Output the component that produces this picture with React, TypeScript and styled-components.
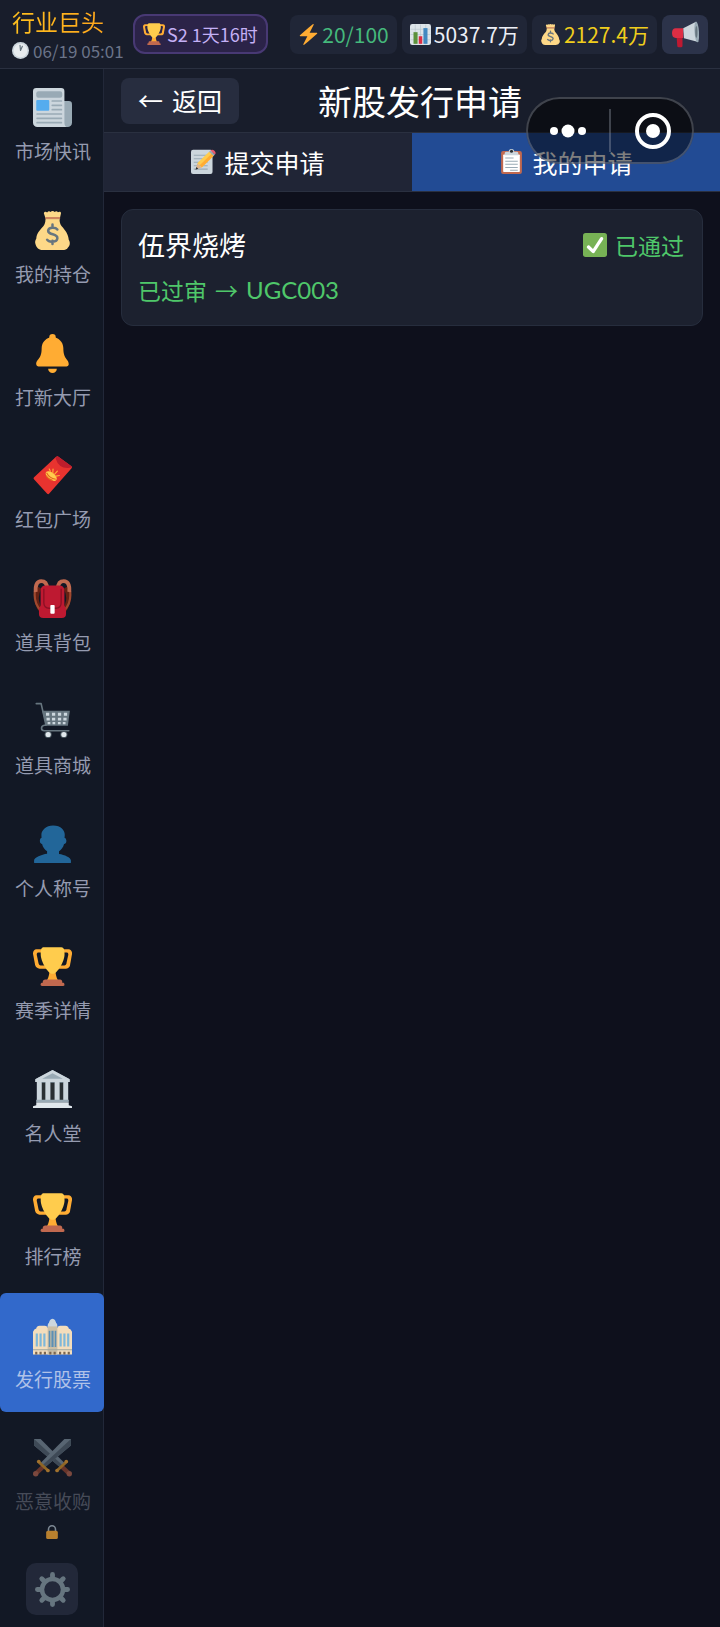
import React from "react";
import styled, { createGlobalStyle } from "styled-components";

const GlobalStyle = createGlobalStyle`
  * { box-sizing: border-box; }
  body {
    margin: 0;
    background: #0e101c;
    color: #fff;
    font-family: "Noto Sans CJK SC", sans-serif;
  }
  button { font: inherit; color: inherit; border: 0; margin: 0; }
  h1, h2, p, ul { margin: 0; padding: 0; font-weight: 400; }
  ul { list-style: none; }
`;

/* ---------- icons ---------- */

const Svg = styled.svg<{ $size: number }>`
  display: block;
  flex: none;
  width: ${(p) => p.$size}px;
  height: ${(p) => p.$size}px;
`;

const art: Record<string, React.ReactNode> = {
  trophy: (
    <>
      <path fill="#FFAC33" d="M5.123 5h6C12.227 5 13 4.896 13 6V4c0-1.104-.773-2-1.877-2h-8c-2 0-3.583 2.125-3 5 0 0 1.791 9.375 1.917 9.958C2.373 18.5 4.164 20 6.081 20h6.958c1.105 0-.039-1.896-.039-3v-2c0 1.104-.773 2-1.877 2h-4c-1.104 0-1.833-1.042-2-2S3.539 7.667 3.539 7.667C3.206 5.75 4.018 5 5.123 5zm25.812 0h-6C23.831 5 22 4.896 22 6V4c0-1.104 1.831-2 2.935-2h8c2 0 3.584 2.125 3 5 0 0-1.633 9.419-1.771 10-.354 1.5-2.042 3-4 3h-7.146C21.914 20 22 18.104 22 17v-2c0 1.104 1.831 2 2.935 2h4c1.104 0 1.834-1.042 2-2s1.584-7.333 1.584-7.333C32.851 5.75 32.04 5 30.935 5zM20.832 22c0-6.958-2.709 0-2.709 0s-3-6.958-3 0-3.291 10-3.291 10h12.292c-.001 0-3.292-3.042-3.292-10z" />
      <path fill="#FFCC4D" d="M29.123 6.577c0 6.775-6.77 18.192-11 18.192-4.231 0-11-11.417-11-18.192 0-5.195 1-6.319 3-6.319 1.374 0 6.025-.027 8-.027l7-.001c2.917-.001 4 .684 4 6.347z" />
      <path fill="#C1694F" d="M27 33c0 1.104.227 2-.877 2h-16C9.018 35 9 34.104 9 33v-1c0-1.104 1.164-2 2.206-2h13.917c1.042 0 1.877.896 1.877 2v1z" />
      <path fill="#C1694F" d="M29 34.625c0 .76.165 1.375-1.252 1.375H8.498C7.206 36 7 35.385 7 34.625v-.25C7 33.615 7.738 33 8.498 33h19.25c.759 0 1.252.615 1.252 1.375v.25z" />
    </>
  ),
  bell: (
    <g fill="#FFAC33">
      <path d="M28 13c0 11 5 10 5 15 0 0 0 2-2 2H5c-2 0-2-2-2-2 0-5 5-4 5-15C8 7.478 12.477 3 18 3s10 4.478 10 10z" />
      <circle cx="18" cy="3" r="3" />
      <path d="M18 36c2.209 0 4-1.791 4-4h-8c0 2.209 1.791 4 4 4z" />
    </g>
  ),
  person: (
    <path fill="#226699" d="M24 26.799v-2.566c2-1.348 4.08-3.779 4.703-6.896.186.103.206.17.413.17.991 0 1.709-1.287 1.709-2.873 0-1.562-.823-2.827-1.794-2.865.187-.674.293-1.577.293-2.735C29.324 5.168 26 .527 18.541.527c-6.629 0-10.777 4.641-10.777 8.507 0 1.123.069 2.043.188 2.755-.911.137-1.629 1.352-1.629 2.845 0 1.587.804 2.873 1.796 2.873.206 0 .025-.067.209-.17C8.952 20.453 11 22.885 13 24.232v2.414c-5 .645-12 3.437-12 6.23V34.5Q1 35 1.6 35h32.8q.6 0 .6-.5v-1.63c0-2.792-6-5.425-11-6.071z" />
  ),
  bolt: (
    <path fill="#FFAC33" d="M32.938 15.651C32.792 15.26 32.418 15 32 15H19.925L26.89 1.458c.219-.426.106-.947-.271-1.243C26.437.071 26.218 0 26 0c-.233 0-.466.082-.653.243L18 6.588 3.347 19.243c-.316.273-.43.714-.284 1.105S3.582 21 4 21h12.075L9.11 34.542c-.219.426-.106.947.271 1.243.182.144.401.215.619.215.233 0 .466-.082.653-.243L18 29.412l14.653-12.655c.317-.273.43-.714.285-1.106z" />
  ),
  check: (
    <>
      <rect width="36" height="36" rx="4" fill="#77B255" />
      <path fill="#fff" d="M29.28 6.362c-1.156-.751-2.704-.422-3.458.736L14.936 23.877l-5.029-4.65c-1.014-.938-2.596-.875-3.533.138-.937 1.014-.875 2.596.139 3.533l7.209 6.666c.48.445 1.09.665 1.696.665.673 0 1.534-.282 2.099-1.139.332-.506 12.5-19.27 12.5-19.27.751-1.159.421-2.707-.737-3.458z" />
    </>
  ),
  news: (
    <>
      <path fill="#99AAB5" d="M26 12h7a3 3 0 0 1 3 3v17a4 4 0 0 1-4 4h-6z" />
      <path fill="#CCD6DD" d="M3 0h23a3 3 0 0 1 3 3v29c0 2 .8 3.400 2 4H4a4 4 0 0 1-4-4V3a3 3 0 0 1 3-3z" />
      <rect x="3" y="3" width="24" height="6" rx="2" fill="#99AAB5" />
      <rect x="3" y="11" width="12" height="10" rx="1" fill="#55ACEE" />
      <path stroke="#99AAB5" strokeWidth="1.6" strokeLinecap="round" d="M17.8 12h8.400M17.800 16h8.400M17.800 20h8.400M3.800 24h22.400M3.800 28h22.400M3.800 32h22.400" />
    </>
  ),
  bag: (
    <>
      <path fill="#FDD888" d="M33 26.500c-.4-5-3-8.500-6.500-12.500C25 12.300 24.500 10 24.500 7.500h-13C11.500 10 11 12.300 9.500 14 6 18 3.400 20.500 3 25.500c-1 1.500-1.300 3-.8 4.700C3 33.500 5 36 9 36h18c2.500 0 4.500-.5 5.300-2.400 2-1.500 2.200-5 .7-7.100z" />
      <path fill="#FDD888" d="M10 2c.5-1.500 2-1.700 3-.7C14.200-.2 15.500.2 16.200 1c1-1.300 2.800-1.300 3.800 0 1-.9 2.300-1 3 .2 1.200-1.100 3-.7 2.800 1L24.500 8h-12.500z" />
      <path stroke="#BF6952" strokeWidth="1.500" strokeLinecap="round" d="M12 6.500h12.500" />
      <path stroke="#67757F" strokeWidth="2.300" fill="none" strokeLinecap="round" d="M22.500 17c-1.500-2-8-2.500-8.500 1-.4 4.600 9 2.400 8.500 7.200-.4 4-8 3.800-9.500 1.300M18 12.500v3M18 27.500v3" />
    </>
  ),
  envelope: (
    <>
      <path fill="#E8332F" d="M1 19.500 21.300.6q1-.9 2.200 0L35.500 9.500q.9.800.1 1.700L15 34.700q-.9 1-1.900.1L.9 21.500q-.8-1 .1-2z" />
      <path fill="#BE1D2C" d="M22.400 0q.6 0 1.100.6L35.500 9.500q.5.600.3 1.200-11.800 2.300-15-8.600z" />
      <ellipse cx="16.800" cy="18.500" rx="6" ry="3.300" transform="rotate(38 16.800 18.500)" fill="#FFCC4D" />
      <path stroke="#E5651F" strokeWidth="1" fill="none" d="M12.500 15.500q2.500 5 8.500 6M12 18q2 3.500 6 4.500" />
      <path stroke="#FFAC33" strokeWidth="1.100" strokeLinecap="round" d="M18.300 15.500l.2-3.500M20 16.700l2.500-2.700M21.300 18.500l3-.5M16 14l-1-2" />
    </>
  ),
  backpack: (
    <>
      <path fill="none" stroke="#662113" strokeWidth="4" d="M6 8C2 15 2 22 8 30M30 8c4 7 4 14-2 22" />
      <path fill="none" stroke="#A0492F" strokeWidth="2" d="M1.800 11C.8 18 2.500 24 7 29M34.200 11c1 7-.7 13-5.200 18" />
      <path fill="none" stroke="#C1694F" strokeWidth="3.500" d="M2.500 12C2 5 4 2 7.500 2S13 4 13 9M33.500 12c.5-7-1.500-10-5-10S23 4 23 9" />
      <path fill="#BE1931" d="M12 6h12q5 0 5 5v14q1.500 1 1.500 4v3q0 4-4 4h-17q-4 0-4-4v-3q0-3 1.500-4V11q0-5 5-5z" />
      <path fill="none" stroke="#8A1024" strokeWidth="1.200" d="M10 9v13q0 5 5 5h6q5 0 5-5V9" />
      <rect x="16" y="24" width="4" height="8" rx=".8" fill="#fff" />
    </>
  ),
  cart: (
    <>
      <path fill="none" stroke="#66757F" strokeWidth="1.500" strokeLinecap="round" strokeLinejoin="round" d="M3 1.500h4.500L12 21.500H10.500C7 22 7 26.500 10.500 26.500H33" />
      <path fill="#66757F" d="M8.500 8h25.500l-1.800 14H12z" />
      <g fill="#CCD6DD">
        <path d="M12 10h3v2.800h-3zM17.500 10h3v2.800h-3zM23 10h3v2.800h-3zM28.500 10h3v2.800h-3zM12.500 14.500h3v2.500h-3zM17.500 14.500h3v2.500h-3zM23 14.500h3v2.500h-3zM28 14.500h3v2.500h-3zM13.500 18.500h2.500v2h-2.500zM18 18.500h2.500v2H18zM23 18.500h2.500v2H23zM27.500 18.500H30v2h-2.500z" />
      </g>
      <g fill="#4D5A63"><circle cx="14" cy="30" r="3.300" /><circle cx="28.500" cy="30" r="3.300" /></g>
      <g fill="#E1E8ED"><circle cx="14" cy="30" r="2.400" /><circle cx="28.500" cy="30" r="2.400" /></g>
    </>
  ),
  bank: (
    <>
      <path fill="#66757F" d="M4 11h28v19H4z" />
      <path fill="#292F33" d="M8 12h3.500v17H8zM16 12h4v17h-4zM24.500 12H28v17h-3.500z" />
      <path fill="#CCD6DD" d="M3.500 11H8v18H3.500zM11.500 11H16v18h-4.500zM20 11h4.500v18H20zM28 11h4.500v18H28z" />
      <path fill="#99AAB5" d="M18 0 3 8v2.500h30V8z" />
      <path fill="#CCD6DD" d="M18 0 2 8.500V11h32V8.500zm0 3 9.500 5h-19z" />
      <path fill="#99AAB5" d="M3 27.500h30V30H3z" />
      <path fill="#E1E8ED" d="M3 30h30v2.500l3 1V35H0v-1.500l3-1z" />
    </>
  ),
  building: (
    <g transform="translate(0 2.600)">
      <path fill="#CCD6DD" d="M14.500 5Q15 .5 18 0q3 .5 3.500 5z" />
      <path fill="#CCD6DD" d="M13.500 7q0-3 2-3.500h5q2 .5 2 3.500v3h-9z" />
      <path fill="#F3DDBC" d="M0 12q1-2.500 3-3 .5-2.500 3-2.500h5q2 0 2.500 2h9q.5-2 2.500-2h5q2.500 0 3 2.500 2 .5 3 3v21H0z" />
      <path fill="#CBBFA6" d="M13.500 7h9v26h-9z" />
      <path fill="#7DB8DA" d="M2.500 13.500h2v12h-2zM6 13.500h2v12H6zM9.500 13.500h2v12h-2zM24.500 13.500h2v12h-2zM28 13.500h2v12h-2zM31.500 13.500h2v12h-2z" />
      <path fill="#5B8FB5" d="M14.500 11h1.500v15h-1.500zM17 11h2v15h-2zM20 11h1.500v15H20z" />
      <path stroke="#9FA79F" strokeWidth="1" d="M0 28.500h36" />
      <path fill="#7B654F" d="M2 30.500h2V33H2zM6 30.500h2V33H6zM10 30.500h2V33h-2zM15 30.500h2V33h-2zM19 30.500h2V33h-2zM24 30.500h2V33h-2zM28 30.500h2V33h-2zM32 30.500h2V33h-2z" />
    </g>
  ),
  swords: (
    <>
      {[false, true].map((flip) => (
        <g key={String(flip)} transform={flip ? "matrix(-1 0 0 1 36 0)" : undefined}>
          <path fill="#8899A6" d="M1 1h6l22 22-4 4L1 7z" />
          <path fill="#5C6B77" d="M1 1l26 24-2 2L1 7z" />
          <path stroke="#A0492F" strokeWidth="4" d="M26.500 26.500l6 5.500" />
          <path stroke="#E39A26" strokeWidth="2.600" strokeLinecap="round" d="M30.500 22.300l-8 7.500" />
          <circle cx="33.500" cy="33" r="2.500" fill="#C1694F" />
          <circle cx="30.700" cy="21.700" r="1.700" fill="#FFAC33" />
          <circle cx="22.200" cy="30" r="1.700" fill="#FFAC33" />
        </g>
      ))}
    </>
  ),
  lock: (
    <>
      <path fill="none" stroke="#AAB8C2" strokeWidth="4" d="M9 19v-8a9 9 0 0 1 18 0v8" />
      <rect x="3" y="15" width="30" height="21" rx="4" fill="#FFAC33" />
    </>
  ),
  gear: (
    <g stroke="#66757F" fill="none">
      <circle cx="18" cy="18" r="10.800" strokeWidth="4.600" />
      <path strokeWidth="5" strokeLinecap="round" d="M18 5V2.500M18 31v2.500M5 18H2.500M31 18h2.500M8.800 8.800 7 7M27.200 27.200 29 29M8.800 27.200 7 29M27.200 8.800 29 7" />
    </g>
  ),
  chart: (
    <>
      <rect width="36" height="36" rx="4" fill="#DDE4E9" />
      <path stroke="#B4C1CB" strokeWidth="1" d="M1 9h34M1 18h34M1 27h34M9 1v34M18 1v34M27 1v34" />
      <path fill="#5C913B" d="M6 14h7v20H6z" />
      <path fill="#DD2E44" d="M15 21h6v13h-6z" />
      <path fill="#4289C1" d="M23 7h7v27h-7z" />
    </>
  ),
  memo: (
    <>
      <rect x="0" y="1" width="31" height="35" rx="3" fill="#CCD6DD" />
      <path stroke="#99AAB5" strokeWidth="1.500" d="M4 9h20M4 14h20M4 19h20M4 24h20M4 29h20" />
      <path fill="#FFCC4D" d="M26.500 3.500l6.500 6-17.500 17L9 20.500z" />
      <path fill="#FFAC33" d="M30 6.500l3 3-17.500 17-3-3z" />
      <path fill="#E0B58A" d="M9 20.500l6.500 6L7 29.500z" />
      <path fill="#292F33" d="M7.800 26l2.700 2.500-4 1.500z" />
      <path fill="#99AAB5" d="M26 4l2-2 6.500 6-2 2z" />
      <path fill="#EA596E" d="M28 2c3-3.500 10 2.500 6.500 6z" />
    </>
  ),
  clipboard: (
    <>
      <rect x="3" y="3" width="30" height="33" rx="3" fill="#C1694F" />
      <rect x="6" y="8" width="24" height="25" rx="1" fill="#fff" />
      <path stroke="#99AAB5" strokeWidth="1.500" d="M9 13h12M9 17.500h18M9 22h18M9 26.500h18M16 30.500h11" />
      <path fill="#CCD6DD" d="M10 4h4q0-4 4-4t4 4h4q2 0 2 5H8q0-5 2-5z" />
      <circle cx="18" cy="3.300" r="2.200" fill="#292F33" />
    </>
  ),
  clock: (
    <>
      <circle cx="18" cy="18" r="18" fill="#CCD6DD" />
      <circle cx="18" cy="18" r="14.500" fill="#E8ECEF" />
      <path stroke="#66757F" strokeWidth="2.500" strokeLinecap="round" d="M18 18l-1-11M18 18l4-9" />
    </>
  ),
  megaphone: (
    <>
      <path fill="#BE1931" d="M6 19h8v14q0 2-2 2H9q-2 0-2-2z" />
      <path fill="#DD2E44" d="M5 9.500h10v13H5q-5 0-5-6.500t5-6.500z" />
      <path fill="#CCD6DD" d="M15 9.500 32 1l3 27-19-5z" />
      <ellipse cx="33" cy="14.500" rx="3" ry="14" transform="rotate(-4 33 14.500)" fill="#99AAB5" />
      <ellipse cx="32.500" cy="14.500" rx="1.500" ry="8" fill="#66757F" />
    </>
  ),
};

const Icon = ({ name, size }: { name: string; size: number }) => (
  <Svg $size={size} viewBox="0 0 36 36" aria-hidden="true">
    {art[name]}
  </Svg>
);

/* ---------- shell ---------- */

const Page = styled.div`
  min-height: 100vh;
  display: flex;
  flex-direction: column;
`;

const TopBar = styled.header`
  display: flex;
  align-items: center;
  height: 69px;
  padding: 0 12px;
  background: #181d2b;
  border-bottom: 1px solid #2a3040;
`;

const Brand = styled.div`
  display: flex;
  flex-direction: column;
  gap: 2px;
  width: 121px;
  padding-bottom: 1px;
`;

const BrandName = styled.h1`
  font-size: 23px;
  line-height: 32px;
  color: transparent;
  background: linear-gradient(90deg, #ffc01e, #ff9f1c);
  background-clip: text;
`;

const Clock = styled.div`
  display: flex;
  align-items: center;
  gap: 4px;
  font-size: 17px;
  line-height: 24px;
  color: #6b7489;
  white-space: nowrap;
`;

const Season = styled.button`
  display: flex;
  align-items: center;
  gap: 2px;
  height: 40px;
  padding: 0 8px;
  border: 2px solid #483974;
  border-radius: 12px;
  background: #2b2348;
  color: #c4b0f5;
  font-size: 18px;
  white-space: nowrap;
`;

const Stats = styled.div`
  display: flex;
  gap: 5px;
  margin-left: auto;
`;

const Stat = styled.div<{ $color: string }>`
  display: flex;
  align-items: center;
  gap: 3px;
  height: 39px;
  padding: 0 8px;
  border-radius: 8px;
  background: #202637;
  color: ${(p) => p.$color};
  font-size: 21px;
  white-space: nowrap;
`;

const NoticeButton = styled.button`
  display: grid;
  place-items: center;
  width: 46px;
  height: 39px;
  padding: 0;
  border-radius: 8px;
  background: #2c334a;
`;

const Body = styled.div`
  flex: 1;
  display: flex;
`;

const Sidebar = styled.nav`
  flex: none;
  display: flex;
  flex-direction: column;
  width: 104px;
  background: #121825;
  box-shadow: inset -1px 0 #222839;
  overflow: hidden;
`;

const NavList = styled.ul`
  flex: 1;
  display: flex;
  flex-direction: column;
  gap: 3px;
  margin-top: -4px;
`;

const NavCell = styled.li`
  flex: 1;
  display: flex;
  min-height: 119px;
`;

const NavButton = styled.button<{ $active?: boolean }>`
  flex: 1;
  display: flex;
  flex-direction: column;
  align-items: center;
  padding: 23px 0 0;
  border-radius: 6px;
  background: ${(p) => (p.$active ? "#3269cb" : "transparent")};
  color: ${(p) => (p.$active ? "#b0c2e8" : "#959bb0")};
  &:disabled { color: #464b58; }
`;

const Dim = styled.span`
  opacity: 0.6;
`;

const NavLabel = styled.span`
  margin-top: 10px;
  padding-left: 2px;
  font-size: 19px;
  line-height: 28px;
`;

const LockMark = styled.span`
  height: 14px;
  margin-top: 10px;
  opacity: 0.7;
`;

const SidebarFoot = styled.div`
  display: flex;
  justify-content: center;
  padding: 28px 0 12px;
`;

const GearButton = styled.button`
  display: grid;
  place-items: center;
  width: 52px;
  height: 52px;
  padding: 0;
  border-radius: 10px;
  background: #222839;
`;

const Main = styled.main`
  flex: 1;
  min-width: 0;
`;

const TitleBar = styled.div`
  display: flex;
  align-items: center;
  justify-content: space-between;
  height: 64px;
  padding: 0 17px;
  background: #181d2b;
  border-bottom: 1px solid #2a3040;
`;

const BackButton = styled.button`
  display: flex;
  align-items: center;
  gap: 9px;
  height: 46px;
  padding: 0 17px 2px;
  border-radius: 8px;
  background: #272d3f;
  font-size: 25px;
  white-space: nowrap;
`;

const PageTitle = styled.h2`
  font-size: 34px;
  line-height: 48px;
  white-space: nowrap;
`;

const TitleSpacer = styled.div`
  width: 102px;
`;

const Tabs = styled.div`
  display: flex;
  height: 59px;
  border-bottom: 1px solid #2a3040;
`;

const Tab = styled.button<{ $active?: boolean }>`
  flex: 1;
  display: flex;
  align-items: center;
  justify-content: center;
  gap: 8px;
  padding: 0 0 1px;
  background: ${(p) => (p.$active ? "#224b94" : "#202536")};
  font-size: 25px;
  white-space: nowrap;
`;

const Applications = styled.ul`
  padding: 17px;
`;

const Card = styled.li`
  display: flex;
  flex-direction: column;
  gap: 6px;
  padding: 15px 18px 16px 16px;
  border: 1px solid #262d3d;
  border-radius: 12px;
  background: #1c212f;
`;

const CardHead = styled.div`
  display: flex;
  align-items: center;
  justify-content: space-between;
  line-height: 40px;
`;

const Company = styled.span`
  font-size: 27px;
`;

const Status = styled.span`
  display: flex;
  align-items: center;
  gap: 8px;
  font-size: 23px;
  color: #4fc76a;
`;

const Result = styled.p`
  display: flex;
  gap: 8px;
  font-size: 23px;
  line-height: 38px;
  color: #4fc76a;
`;

const StockCode = styled.span`
  font-family: Lato, "Noto Sans CJK SC", sans-serif;
  font-size: 24px;
`;

/* Floating mini-program controls sit over the page */
const Capsule = styled.div`
  position: absolute;
  top: 97px;
  right: 26px;
  display: flex;
  align-items: center;
  width: 168px;
  height: 67px;
  border-radius: 34px;
  background: rgba(0, 0, 0, 0.5);
  box-shadow: inset 0 0 0 2px rgba(160, 165, 180, 0.35);
`;

const CapsuleButton = styled.button`
  flex: 1;
  display: grid;
  place-items: center;
  padding: 0;
  background: none;
`;

const CapsuleRule = styled.span`
  width: 2px;
  height: 43px;
  background: rgba(160, 165, 180, 0.35);
`;

const navItems = [
  { icon: "news", label: "市场快讯" },
  { icon: "bag", label: "我的持仓" },
  { icon: "bell", label: "打新大厅" },
  { icon: "envelope", label: "红包广场" },
  { icon: "backpack", label: "道具背包" },
  { icon: "cart", label: "道具商城" },
  { icon: "person", label: "个人称号" },
  { icon: "trophy", label: "赛季详情" },
  { icon: "bank", label: "名人堂" },
  { icon: "trophy", label: "排行榜" },
  { icon: "building", label: "发行股票", active: true },
  { icon: "swords", label: "恶意收购", locked: true },
];

export default function App() {
  return (
    <>
      <GlobalStyle />
      <Page>
        <TopBar>
          <Brand>
            <BrandName>行业巨头</BrandName>
            <Clock>
              <Icon name="clock" size={17} />
              06/19 05:01
            </Clock>
          </Brand>
          <Season>
            <Icon name="trophy" size={22} />
            S2 1天16时
          </Season>
          <Stats>
            <Stat $color="#45b97c"><Icon name="bolt" size={21} />20/100</Stat>
            <Stat $color="#eceff6"><Icon name="chart" size={21} />5037.7万</Stat>
            <Stat $color="#f0ce1c"><Icon name="bag" size={21} />2127.4万</Stat>
            <NoticeButton aria-label="公告"><Icon name="megaphone" size={27} /></NoticeButton>
          </Stats>
        </TopBar>
        <Body>
          <Sidebar>
            <NavList>
              {navItems.map((item) => (
                <NavCell key={item.label}>
                  <NavButton $active={item.active} disabled={item.locked}>
                    {item.locked ? (
                      <Dim><Icon name={item.icon} size={39} /></Dim>
                    ) : (
                      <Icon name={item.icon} size={39} />
                    )}
                    <NavLabel>{item.label}</NavLabel>
                    {item.locked && <LockMark><Icon name="lock" size={14} /></LockMark>}
                  </NavButton>
                </NavCell>
              ))}
            </NavList>
            <SidebarFoot>
              <GearButton aria-label="设置"><Icon name="gear" size={35} /></GearButton>
            </SidebarFoot>
          </Sidebar>
          <Main>
            <TitleBar>
              <BackButton><span>←</span><span>返回</span></BackButton>
              <PageTitle>新股发行申请</PageTitle>
              <TitleSpacer />
            </TitleBar>
            <Tabs>
              <Tab><Icon name="memo" size={25} />提交申请</Tab>
              <Tab $active><Icon name="clipboard" size={25} />我的申请</Tab>
            </Tabs>
            <Applications>
              <Card>
                <CardHead>
                  <Company>伍界烧烤</Company>
                  <Status><Icon name="check" size={24} />已通过</Status>
                </CardHead>
                <Result>
                  <span>已过审</span>
                  <span>→</span>
                  <StockCode>UGC003</StockCode>
                </Result>
              </Card>
            </Applications>
          </Main>
        </Body>
        <Capsule>
          <CapsuleButton aria-label="更多">
            <svg width="36" height="14" viewBox="0 0 36 14" fill="#fff">
              <circle cx="4" cy="7" r="4" />
              <circle cx="18" cy="7" r="6.500" />
              <circle cx="32" cy="7" r="4" />
            </svg>
          </CapsuleButton>
          <CapsuleRule />
          <CapsuleButton aria-label="关闭">
            <svg width="36" height="36" viewBox="0 0 36 36">
              <circle cx="18" cy="18" r="16" fill="none" stroke="#fff" strokeWidth="4" />
              <circle cx="18" cy="18" r="7" fill="#fff" />
            </svg>
          </CapsuleButton>
        </Capsule>
      </Page>
    </>
  );
}
